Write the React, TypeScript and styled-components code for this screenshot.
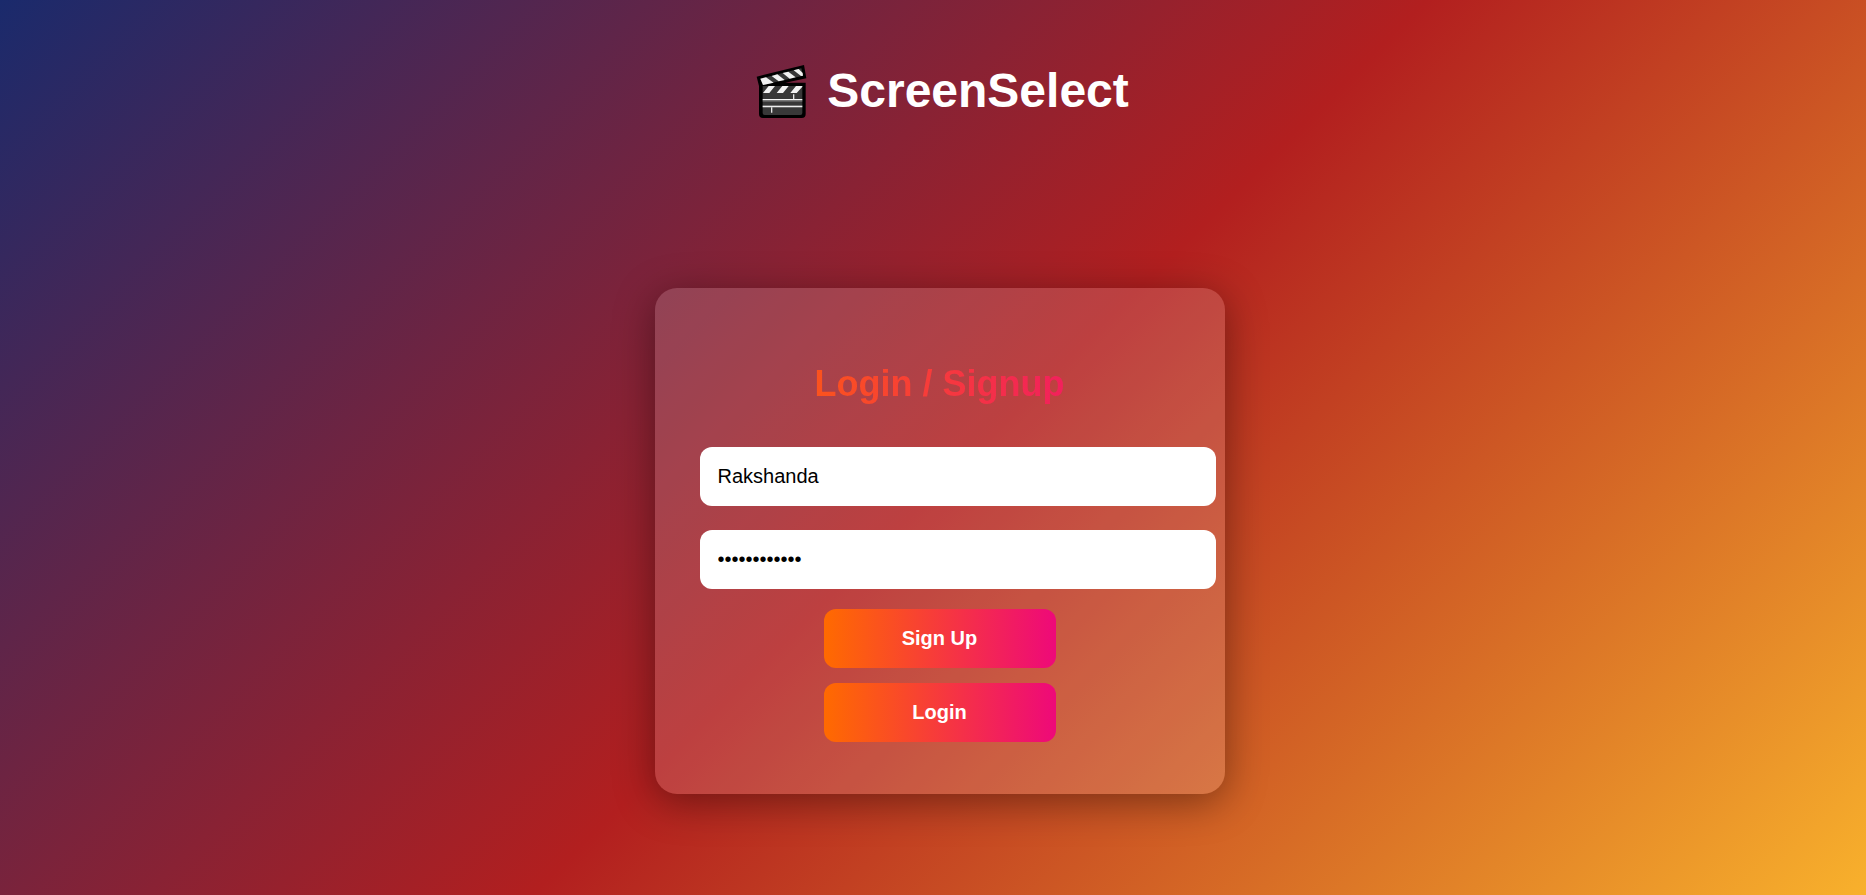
import React, { useState } from "react";
import styled, { createGlobalStyle } from "styled-components";

const GlobalStyle = createGlobalStyle`
  body {
    margin: 0;
    font-family: Arial, "Liberation Sans", sans-serif;
  }
`;

const Page = styled.div`
  box-sizing: border-box;
  min-height: 100vh;
  padding: 58px 0 100px 13px;
  display: flex;
  flex-direction: column;
  align-items: center;
  gap: 166px;
  background: linear-gradient(135deg, #1a2a6c, #b21f1f, #fdbb2d) no-repeat;
  background-size: calc(100% + 14px) calc(100% + 80px);
`;

const Header = styled.header`
  display: flex;
  align-items: flex-end;
  gap: 13px;
`;

const Title = styled.h1`
  margin: 0;
  color: #fff;
  font-size: 48px;
  line-height: 62px;
`;

const Card = styled.form`
  box-sizing: border-box;
  width: 100%;
  max-width: 570px;
  padding: 75px 45px 52px;
  display: flex;
  flex-direction: column;
  align-items: center;
  border-radius: 22px;
  background: rgba(255, 255, 255, 0.15);
  box-shadow: 0 8px 40px rgba(0, 0, 0, 0.4);
`;

const Heading = styled.h2`
  margin: 0 0 42px;
  width: 100%;
  text-align: center;
  font-size: 36px;
  line-height: 42px;
  color: transparent;
  background: linear-gradient(90deg, #ff6a00, #ee0979);
  background-clip: text;
  -webkit-background-clip: text;
`;

const Fields = styled.div`
  width: 100%;
  display: flex;
  flex-direction: column;
  gap: 24px;
`;

const Field = styled.input`
  box-sizing: content-box;
  width: 100%;
  height: 23px;
  padding: 18px;
  border: 0;
  border-radius: 12px;
  outline: none;
  background: #fff;
  color: #000;
  font-family: inherit;
  font-size: 20px;
`;

const Actions = styled.div`
  width: 232px;
  margin-top: 20px;
  display: flex;
  flex-direction: column;
  gap: 15px;
`;

const Button = styled.button`
  padding: 18px;
  border: 0;
  border-radius: 12px;
  background: linear-gradient(90deg, #ff6a00, #ee0979);
  color: #fff;
  font-family: inherit;
  font-size: 20px;
  font-weight: bold;
  line-height: 23px;
  cursor: pointer;
`;

const Clapper = () => (
  <svg width="64" height="64" viewBox="0 0 192 192" aria-hidden="true">
    <path d="M20 56 L162 21 L169 61 L106 74 H167 V168 Q167 180 155 180 H39 Q27 180 27 168 V84 Z" fill="#000" />
    <path d="M31 62 L154 31 L159 53 L39 81 Z" fill="#383838" />
    <path d="M31 62 L48 58 L71 74 L50 79 L39 81 Z M65 54 L82 49 L104 66 L86 70 Z M98 45 L115 41 L137 58 L119 62 Z M131 37 L146 33 L158 45 L159 53 L153 54 Z" fill="#f2f2f2" />
    <path d="M38 84 H157 V165 Q157 171 151 171 H44 Q38 171 38 165 Z" fill="#383838" />
    <path d="M56 84 H75 L58 105 H39 Z M97 84 H116 L99 105 H80 Z M138 84 H157 V86 L140 105 H121 Z" fill="#f2f2f2" />
    <path d="M38 125 H157 M38 146 H157" stroke="#f7f7f7" strokeWidth="4" />
    <path d="M38 129 H157 M38 143 H157" stroke="#a5a5a5" strokeWidth="2" />
    <path d="M131 109 V124 M65 148 V164" stroke="#e5e5e5" strokeWidth="4" />
  </svg>
);

export default function App() {
  const [username, setUsername] = useState("Rakshanda");
  const [password, setPassword] = useState("screenselect");

  return (
    <>
      <GlobalStyle />
      <Page>
        <Header>
          <Clapper />
          <Title>ScreenSelect</Title>
        </Header>
        <Card onSubmit={(event) => event.preventDefault()}>
          <Heading>Login / Signup</Heading>
          <Fields>
            <Field
              type="text"
              aria-label="Username"
              value={username}
              onChange={(event) => setUsername(event.target.value)}
            />
            <Field
              type="password"
              aria-label="Password"
              value={password}
              onChange={(event) => setPassword(event.target.value)}
            />
          </Fields>
          <Actions>
            <Button type="button">Sign Up</Button>
            <Button type="submit">Login</Button>
          </Actions>
        </Card>
      </Page>
    </>
  );
}
